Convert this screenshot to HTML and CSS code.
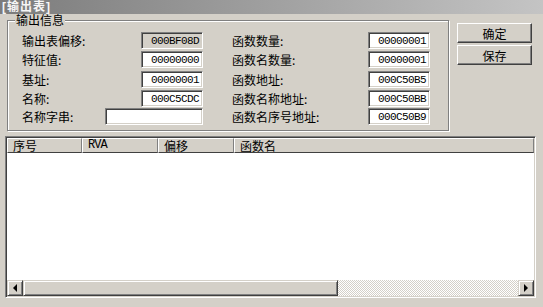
FILE: index.html
```html
<!DOCTYPE html>
<html lang="zh">
<head>
  <meta charset="UTF-8">
  <title>输出表</title>
  <link rel="stylesheet" href="styles.css">
</head>
<body>
  <div class="caption">[输出表]</div>

  <div class="top">
    <div class="group">
      <span class="group-title">输出信息</span>
      <div class="col col-left">
        <div class="row"><span class="lbl">输出表偏移:</span><span class="field readonly">000BF08D</span></div>
        <div class="row"><span class="lbl">特征值:</span><span class="field">00000000</span></div>
        <div class="row"><span class="lbl">基址:</span><span class="field">00000001</span></div>
        <div class="row"><span class="lbl">名称:</span><span class="field">000C5CDC</span></div>
        <div class="row"><span class="lbl">名称字串:</span><span class="field wide"></span></div>
      </div>
      <div class="col col-right">
        <div class="row"><span class="lbl">函数数量:</span><span class="field">00000001</span></div>
        <div class="row"><span class="lbl">函数名数量:</span><span class="field">00000001</span></div>
        <div class="row"><span class="lbl">函数地址:</span><span class="field">000C50B5</span></div>
        <div class="row"><span class="lbl">函数名称地址:</span><span class="field">000C50BB</span></div>
        <div class="row"><span class="lbl">函数名序号地址:</span><span class="field">000C50B9</span></div>
      </div>
    </div>

    <div class="buttons">
      <button class="btn">确定</button>
      <button class="btn">保存</button>
    </div>
  </div>

  <div class="list">
    <div class="list-head">
      <div class="th th-no">序号</div>
      <div class="th th-rva">RVA</div>
      <div class="th th-off">偏移</div>
      <div class="th th-name">函数名</div>
    </div>
    <div class="list-body"></div>
    <div class="hscroll">
      <div class="sb-btn"><span class="arrow-left"></span></div>
      <div class="sb-thumb"></div>
      <div class="sb-track"></div>
      <div class="sb-btn"><span class="arrow-right"></span></div>
    </div>
  </div>
</body>
</html>
```

FILE: styles.css
```css
/* classic windows dialog look */
body {
  margin: 0;
  width: 543px;
  height: 307px;
  overflow: hidden;
  background: #d4d0c8;
  font-family: "Noto Sans CJK SC", "Liberation Sans", sans-serif;
  font-size: 12px;
  color: #000;
}

.caption {
  height: 14px;
  line-height: 14px;
  padding-left: 2px;
  background: linear-gradient(to right, #7c7c7c, #c4c4c4);
  color: #f6f6f6;
  font-family: "Liberation Sans", "Noto Sans CJK SC", sans-serif;
  font-weight: bold;
  letter-spacing: 1px;
}

.top {
  display: flex;
  padding: 6px 0 0 7px;
}

.group {
  position: relative;
  box-sizing: border-box;
  width: 442px;
  height: 111px;
  border: 1px solid #808080;
  box-shadow: inset 1px 1px 0 #fff, 1px 1px 0 #fff;
  display: flex;
  gap: 29px;
  padding: 11px 0 0 14px;
}

.group-title {
  position: absolute;
  top: -6px;
  left: 7px;
  height: 13px;
  padding: 0 1px;
  line-height: 13px;
  font-family: "Liberation Sans", "Noto Sans CJK SC", sans-serif;
  background: #d4d0c8;
}

.col {
  display: grid;
  grid-template-rows: 19px 20px 19px 18px 17px;
}

.col-left {
  width: 181px;
}

.col-right {
  width: 198px;
}

.row {
  display: flex;
  justify-content: space-between;
  align-items: start;
  height: 17px;
}

.lbl {
  line-height: 17px;
}

.field {
  box-sizing: border-box;
  width: 62px;
  height: 17px;
  line-height: 15px;
  padding: 1px 3px 0 0;
  text-align: right;
  background: #fff;
  border-top: 1px solid #808080;
  border-left: 1px solid #808080;
  border-right: 1px solid #fff;
  border-bottom: 1px solid #fff;
  box-shadow: inset 1px 1px 0 #404040, inset -1px -1px 0 #d4d0c8;
  font-family: "Liberation Mono", monospace;
  font-size: 11px;
  letter-spacing: -0.6px;
}

.field.readonly {
  background: #d4d0c8;
}

.field.wide {
  width: 98px;
}

.buttons {
  display: flex;
  flex-direction: column;
  gap: 2px;
  margin: 3px 0 0 8px;
}

.btn {
  box-sizing: border-box;
  width: 75px;
  height: 20px;
  padding: 0;
  font: inherit;
  line-height: 17px;
  background: #d4d0c8;
  border-top: 1px solid #fff;
  border-left: 1px solid #fff;
  border-right: 1px solid #404040;
  border-bottom: 1px solid #404040;
  box-shadow: inset -1px -1px 0 #808080;
}

.list {
  box-sizing: border-box;
  margin: 5px 0 0 5px;
  width: 531px;
  height: 162px;
  border-top: 1px solid #808080;
  border-left: 1px solid #808080;
  border-right: 1px solid #fff;
  border-bottom: 1px solid #fff;
  padding: 1px;
  box-shadow: inset 1px 1px 0 #404040, inset -1px -1px 0 #d4d0c8;
  display: flex;
  flex-direction: column;
}

.list-head {
  display: flex;
  height: 15px;
}

.th {
  box-sizing: border-box;
  height: 15px;
  line-height: 13px;
  padding-left: 5px;
  border-top: 1px solid #fff;
  border-left: 1px solid #fff;
  border-right: 1px solid #808080;
  border-bottom: 1px solid #404040;
}

.th-no { width: 75px; }
.th-off { width: 76px; }
.th-name { flex: 1; }

.th-rva {
  width: 76px;
  font-family: "Liberation Mono", monospace;
  font-size: 12px;
  letter-spacing: -1px;
  line-height: 13px;
}

.list-body {
  flex: 1;
  background: #fff;
}

.hscroll {
  display: flex;
  height: 16px;
}

.sb-btn,
.sb-thumb {
  box-sizing: border-box;
  height: 16px;
  background: #d4d0c8;
  border-top: 1px solid #d4d0c8;
  border-left: 1px solid #d4d0c8;
  border-right: 1px solid #404040;
  border-bottom: 1px solid #404040;
  box-shadow: inset 1px 1px 0 #fff, inset -1px -1px 0 #808080;
}

.sb-btn {
  width: 16px;
  display: flex;
  align-items: center;
  justify-content: center;
}

.sb-thumb {
  width: 315px;
}

.sb-track {
  flex: 1;
  background: repeating-conic-gradient(#fff 0 25%, #d4d0c8 0 50%) 0 0 / 2px 2px;
}

.arrow-left {
  width: 0;
  height: 0;
  border-top: 4px solid transparent;
  border-bottom: 4px solid transparent;
  border-right: 4px solid #000;
}

.arrow-right {
  width: 0;
  height: 0;
  border-top: 4px solid transparent;
  border-bottom: 4px solid transparent;
  border-left: 4px solid #000;
}
```
